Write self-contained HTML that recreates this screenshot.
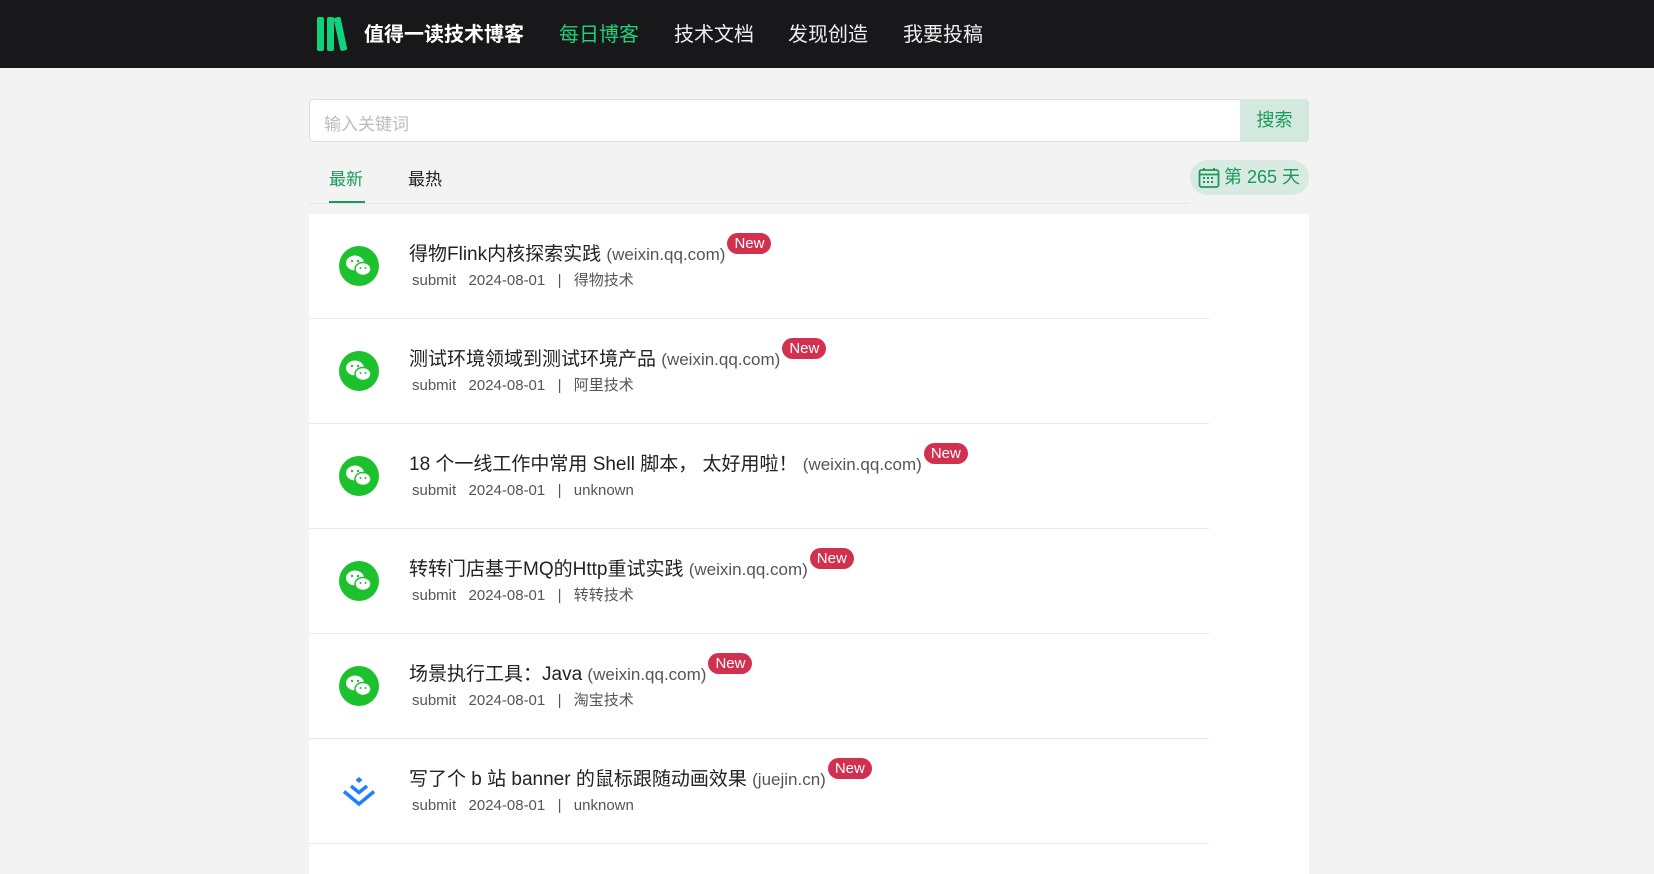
<!DOCTYPE html>
<html><head><meta charset="utf-8"><style>
*{margin:0;padding:0;box-sizing:border-box}
body{width:1654px;height:859px;overflow:hidden;background:#f3f3f3;font-family:"Liberation Sans","Noto Sans CJK SC",sans-serif}
.hd{height:68px;background:#18181b;position:relative}
.hd .t{position:absolute;top:18px;font-size:20px;color:#eee}
.brand{font-weight:bold;color:#fff!important}
.search{position:absolute;left:309px;top:99px;width:1000px;height:43px;background:#fff;border:1px solid #ddd;border-radius:4px}
.search span{position:absolute;left:14px;top:10px;font-size:17px;color:#bbb}
.btn{position:absolute;left:1240px;top:99px;width:69px;height:43px;background:#d3e8de;border-radius:0 4px 4px 0;color:#1a9a5a;font-size:18px;text-align:center;line-height:43px}
.tab{position:absolute;top:165px;font-size:17px}
.pill{position:absolute;left:1190px;top:160px;width:119px;height:35px;border-radius:18px;background:#d8eae1;color:#1a9a5a;font-size:18px;line-height:35px;padding-left:34px}
.card{position:absolute;left:309px;top:214px;width:1000px;height:660px;background:#fff}
.it{position:absolute;left:0;width:900px;height:105px;border-bottom:1px solid #e8e8e8}
.ic{position:absolute;left:30px;top:32px;width:40px;height:40px}
.ti{position:absolute;left:100px;top:29px;font-size:19px;line-height:24px;color:#222;white-space:nowrap}
.ti small{font-size:17px;color:#555}
.new{display:inline-block;position:relative;top:-11px;vertical-align:middle;margin-left:2px;background:#d2304f;color:#fff;font-size:15px;padding:0 7px;border-radius:11px;line-height:21px}
.mt{position:absolute;left:103px;top:58px;font-size:15px;line-height:18px;color:#555;word-spacing:2px}
</style></head><body>
<div class="hd">
<svg style="position:absolute;left:316px;top:16px" width="36" height="36" viewBox="0 0 36 36"><rect x="1" y="1" width="7" height="34" rx="2" fill="#0fd27c"/><rect x="11" y="1" width="7" height="34" rx="2" fill="#0fd27c"/><rect x="21" y="1" width="7" height="34" rx="2" fill="#0fd27c" transform="rotate(-12 24 18)"/></svg>
<span class="t brand" style="left:364px">值得一读技术博客</span>
<span class="t" style="left:559px;color:#1fd07b">每日博客</span>
<span class="t" style="left:674px">技术文档</span>
<span class="t" style="left:788px">发现创造</span>
<span class="t" style="left:903px">我要投稿</span>
</div>
<div class="search"><span>输入关键词</span></div>
<div class="btn">搜索</div>
<span class="tab" style="left:329px;color:#1a9a5a">最新</span>
<div style="position:absolute;left:329px;top:201px;width:36px;height:3px;background:#1a9a5a"></div>
<div style="position:absolute;left:309px;top:203px;width:880px;height:1px;background:#e6e6e6"></div>
<span class="tab" style="left:408px;color:#222">最热</span>
<div class="pill"><svg style="position:absolute;left:8px;top:7px" width="22" height="22" viewBox="0 0 22 22" fill="none" stroke="#1a9a5a" stroke-width="1.8"><rect x="1.5" y="3" width="19" height="17" rx="2"/><line x1="1.5" y1="7.5" x2="20.5" y2="7.5"/><line x1="6" y1="1" x2="6" y2="4"/><line x1="16" y1="1" x2="16" y2="4"/><g fill="#1a9a5a" stroke="none"><rect x="5" y="10" width="2" height="2"/><rect x="9" y="10" width="2" height="2"/><rect x="13" y="10" width="2" height="2"/><rect x="5" y="14" width="2" height="2"/><rect x="9" y="14" width="2" height="2"/><rect x="13" y="14" width="2" height="2"/></g></svg>第 265 天</div>
<div class="card">
<div class="it" style="top:0"><svg class="ic" viewBox="0 0 40 40"><circle cx="20" cy="20" r="20" fill="#1dc12d"/><ellipse cx="16" cy="17" rx="9" ry="7.5" fill="#fff"/><ellipse cx="24" cy="23" rx="8" ry="6.5" fill="#fff" stroke="#1dc12d" stroke-width="1.5"/><circle cx="13" cy="15" r="1.2" fill="#1dc12d"/><circle cx="19" cy="15" r="1.2" fill="#1dc12d"/><circle cx="21.5" cy="22" r="1" fill="#1dc12d"/><circle cx="26.5" cy="22" r="1" fill="#1dc12d"/></svg><div class="ti">得物Flink内核探索实践 <small>(weixin.qq.com)</small><span class="new">New</span></div><div class="mt">submit &nbsp;2024-08-01 &nbsp;| &nbsp;得物技术</div></div>
<div class="it" style="top:105px"><svg class="ic" viewBox="0 0 40 40"><circle cx="20" cy="20" r="20" fill="#1dc12d"/><ellipse cx="16" cy="17" rx="9" ry="7.5" fill="#fff"/><ellipse cx="24" cy="23" rx="8" ry="6.5" fill="#fff" stroke="#1dc12d" stroke-width="1.5"/><circle cx="13" cy="15" r="1.2" fill="#1dc12d"/><circle cx="19" cy="15" r="1.2" fill="#1dc12d"/><circle cx="21.5" cy="22" r="1" fill="#1dc12d"/><circle cx="26.5" cy="22" r="1" fill="#1dc12d"/></svg><div class="ti">测试环境领域到测试环境产品 <small>(weixin.qq.com)</small><span class="new">New</span></div><div class="mt">submit &nbsp;2024-08-01 &nbsp;| &nbsp;阿里技术</div></div>
<div class="it" style="top:210px"><svg class="ic" viewBox="0 0 40 40"><circle cx="20" cy="20" r="20" fill="#1dc12d"/><ellipse cx="16" cy="17" rx="9" ry="7.5" fill="#fff"/><ellipse cx="24" cy="23" rx="8" ry="6.5" fill="#fff" stroke="#1dc12d" stroke-width="1.5"/><circle cx="13" cy="15" r="1.2" fill="#1dc12d"/><circle cx="19" cy="15" r="1.2" fill="#1dc12d"/><circle cx="21.5" cy="22" r="1" fill="#1dc12d"/><circle cx="26.5" cy="22" r="1" fill="#1dc12d"/></svg><div class="ti">18 个一线工作中常用 Shell 脚本， 太好用啦！ <small>(weixin.qq.com)</small><span class="new">New</span></div><div class="mt">submit &nbsp;2024-08-01 &nbsp;| &nbsp;unknown</div></div>
<div class="it" style="top:315px"><svg class="ic" viewBox="0 0 40 40"><circle cx="20" cy="20" r="20" fill="#1dc12d"/><ellipse cx="16" cy="17" rx="9" ry="7.5" fill="#fff"/><ellipse cx="24" cy="23" rx="8" ry="6.5" fill="#fff" stroke="#1dc12d" stroke-width="1.5"/><circle cx="13" cy="15" r="1.2" fill="#1dc12d"/><circle cx="19" cy="15" r="1.2" fill="#1dc12d"/><circle cx="21.5" cy="22" r="1" fill="#1dc12d"/><circle cx="26.5" cy="22" r="1" fill="#1dc12d"/></svg><div class="ti">转转门店基于MQ的Http重试实践 <small>(weixin.qq.com)</small><span class="new">New</span></div><div class="mt">submit &nbsp;2024-08-01 &nbsp;| &nbsp;转转技术</div></div>
<div class="it" style="top:420px"><svg class="ic" viewBox="0 0 40 40"><circle cx="20" cy="20" r="20" fill="#1dc12d"/><ellipse cx="16" cy="17" rx="9" ry="7.5" fill="#fff"/><ellipse cx="24" cy="23" rx="8" ry="6.5" fill="#fff" stroke="#1dc12d" stroke-width="1.5"/><circle cx="13" cy="15" r="1.2" fill="#1dc12d"/><circle cx="19" cy="15" r="1.2" fill="#1dc12d"/><circle cx="21.5" cy="22" r="1" fill="#1dc12d"/><circle cx="26.5" cy="22" r="1" fill="#1dc12d"/></svg><div class="ti">场景执行工具：Java <small>(weixin.qq.com)</small><span class="new">New</span></div><div class="mt">submit &nbsp;2024-08-01 &nbsp;| &nbsp;淘宝技术</div></div>
<div class="it" style="top:525px"><svg class="ic" viewBox="0 0 40 40"><path d="M20 6 L23.5 9 L20 12 L16.5 9Z" fill="#1e80ff"/><path d="M12 15 L20 21.5 L28 15" fill="none" stroke="#1e80ff" stroke-width="3.5"/><path d="M5 20.5 L20 33 L35 20.5" fill="none" stroke="#1e80ff" stroke-width="3.5"/></svg><div class="ti">写了个 b 站 banner 的鼠标跟随动画效果 <small>(juejin.cn)</small><span class="new">New</span></div><div class="mt">submit &nbsp;2024-08-01 &nbsp;| &nbsp;unknown</div></div>
</div>
</body></html>
